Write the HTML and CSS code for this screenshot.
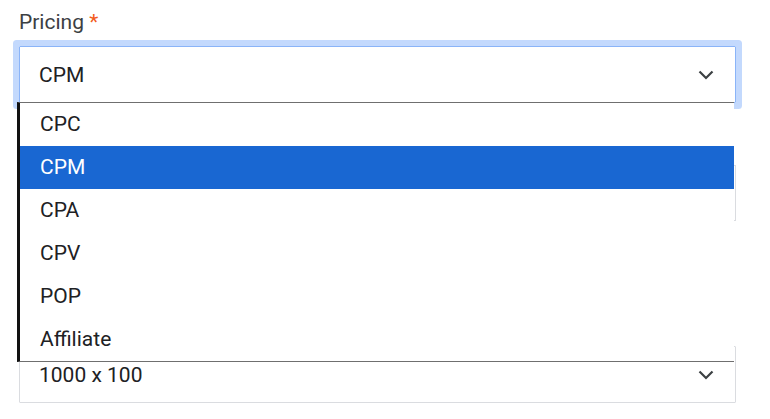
FILE: index.html
```html
<!DOCTYPE html>
<html>
<head>
<meta charset="utf-8">
<link rel="stylesheet" href="styles.css">
</head>
<body>
<div class="form">
  <div class="field field-pricing">
    <div class="label">Pricing <span class="req">*</span></div>
    <div class="select focused">
      <span class="value">CPM</span>
      <svg class="chev" width="16" height="10" viewBox="0 0 16 10"><polyline points="1.5,1.5 8,8 14.5,1.5" fill="none" stroke="#3c4043" stroke-width="2.2"/></svg>
    </div>
    <ul class="menu">
      <li class="opt">CPC</li>
      <li class="opt active">CPM</li>
      <li class="opt">CPA</li>
      <li class="opt">CPV</li>
      <li class="opt">POP</li>
      <li class="opt">Affiliate</li>
    </ul>
  </div>
  <div class="field field-price">
    <div class="input"></div>
  </div>
  <div class="field field-size">
    <div class="select">
      <span class="value">1000 x 100</span>
      <svg class="chev" width="16" height="10" viewBox="0 0 16 10"><polyline points="1.5,1.5 8,8 14.5,1.5" fill="none" stroke="#3c4043" stroke-width="2.2"/></svg>
    </div>
  </div>
</div>
</body>
</html>
```
FILE: styles.css
```css
* { box-sizing: border-box; }
html, body { margin: 0; padding: 0; background: #fff; }
body { font-family: Roboto, "Liberation Sans", sans-serif; color: #202124; }
.form { padding: 10px 0 0 19px; width: 736px; }
.field { position: relative; }
.label { font-size: 21px; line-height: 24px; color: #3c4043; margin-bottom: 12px; }
.req { color: #f25b1d; }
.select {
  height: 57px;
  border: 1px solid #dadce0;
  border-radius: 1px;
  display: flex;
  align-items: center;
  justify-content: space-between;
  padding: 0 21px 0 19px;
  font-size: 21px;
}
.select.focused {
  border-color: #8ab4f8;
  box-shadow: 0 0 0 6px #c3d9fd;
}
.chev { display: block; }
.input { height: 56px; border: 1px solid #dadce0; }
.field-price { margin-top: 62px; }
.field-size { margin-top: 125px; }
.menu {
  position: absolute;
  top: 92px;
  left: -2px;
  width: 717px;
  margin: 0;
  padding: 0;
  list-style: none;
  background: #fff;
  border-top: 1px solid #6f6f6f;
  border-bottom: 1px solid #6f6f6f;
  border-left: 3px solid #111;
  z-index: 2;
}
.opt {
  height: 43px;
  line-height: 43px;
  padding-left: 20px;
  font-size: 21px;
  color: #202124;
}
.opt.active { background: #1967d2; color: #fff; }
```
